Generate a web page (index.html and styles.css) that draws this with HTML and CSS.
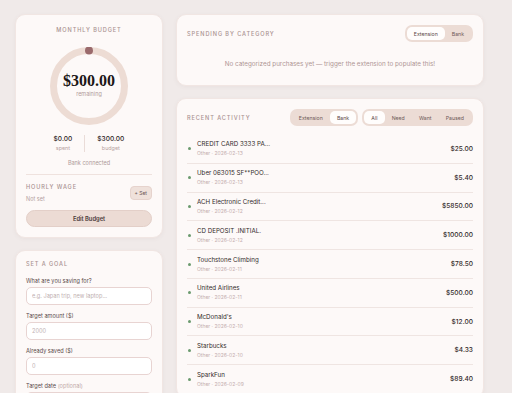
FILE: index.html
```html
<!DOCTYPE html>
<html lang="en">
<head>
  <meta charset="UTF-8" />
  <meta name="viewport" content="width=device-width, initial-scale=1.0"/>
  <title>Budget Dashboard</title>
  <link rel="stylesheet" href="styles.css">
</head>
<body>
  <div class="layout">
    <!-- Left column -->
    <div class="side">
      <div class="card budget">
        <div class="label center">Monthly Budget</div>

        <div class="ring">
          <svg width="78" height="78" viewBox="0 0 78 78">
            <circle cx="39" cy="39" r="35.5" fill="none" stroke="#eddcd4" stroke-width="7"/>
            <circle cx="39" cy="3.5" r="4" fill="#9a6a6c"/>
          </svg>
          <div class="ring-text">
            <div class="big">$300.00</div>
            <div class="small">remaining</div>
          </div>
        </div>

        <div class="stats">
          <div class="stat">
            <div class="stat-val">$0.00</div>
            <div class="stat-lbl">spent</div>
          </div>
          <div class="stat-div"></div>
          <div class="stat">
            <div class="stat-val">$300.00</div>
            <div class="stat-lbl">budget</div>
          </div>
        </div>

        <div class="bank-note">Bank connected</div>

        <div class="wage">
          <div>
            <div class="label">Hourly Wage</div>
            <div class="muted">Not set</div>
          </div>
          <button class="mini-btn">+ Set</button>
        </div>

        <button class="wide-btn">Edit Budget</button>
      </div>

      <div class="card goal">
        <div class="label">Set a Goal</div>
        <label class="field-lbl">What are you saving for?</label>
        <input type="text" placeholder="e.g. Japan trip, new laptop..." />
        <label class="field-lbl">Target amount ($)</label>
        <input type="text" placeholder="2000" />
        <label class="field-lbl">Already saved ($)</label>
        <input type="text" placeholder="0" />
        <label class="field-lbl">Target date <span class="opt">(optional)</span></label>
        <input type="text" />
      </div>
    </div>

    <!-- Right column -->
    <div class="main">
      <div class="card">
        <div class="card-head">
          <div class="label">Spending by Category</div>
          <div class="seg">
            <span class="on">Extension</span>
            <span>Bank</span>
          </div>
        </div>
        <p class="empty">No categorized purchases yet — trigger the extension to populate this!</p>
      </div>

      <div class="card activity">
        <div class="card-head">
          <div class="label">Recent Activity</div>
          <div class="segs">
            <div class="seg">
              <span>Extension</span>
              <span class="on">Bank</span>
            </div>
            <div class="seg">
              <span class="on">All</span>
              <span>Need</span>
              <span>Want</span>
              <span>Paused</span>
            </div>
          </div>
        </div>

        <ul class="txns">
          <li><i class="dot"></i><div class="info"><div class="name">CREDIT CARD 3333 PA...</div><div class="sub">Other · 2026-02-13</div></div><div class="amt">$25.00</div></li>
          <li><i class="dot"></i><div class="info"><div class="name">Uber 063015 SF**POO...</div><div class="sub">Other · 2026-02-13</div></div><div class="amt">$5.40</div></li>
          <li><i class="dot"></i><div class="info"><div class="name">ACH Electronic Credit...</div><div class="sub">Other · 2026-02-12</div></div><div class="amt">$5850.00</div></li>
          <li><i class="dot"></i><div class="info"><div class="name">CD DEPOSIT .INITIAL.</div><div class="sub">Other · 2026-02-12</div></div><div class="amt">$1000.00</div></li>
          <li><i class="dot"></i><div class="info"><div class="name">Touchstone Climbing</div><div class="sub">Other · 2026-02-11</div></div><div class="amt">$78.50</div></li>
          <li><i class="dot"></i><div class="info"><div class="name">United Airlines</div><div class="sub">Other · 2026-02-11</div></div><div class="amt">$500.00</div></li>
          <li><i class="dot"></i><div class="info"><div class="name">McDonald's</div><div class="sub">Other · 2026-02-10</div></div><div class="amt">$12.00</div></li>
          <li><i class="dot"></i><div class="info"><div class="name">Starbucks</div><div class="sub">Other · 2026-02-10</div></div><div class="amt">$4.33</div></li>
          <li><i class="dot"></i><div class="info"><div class="name">SparkFun</div><div class="sub">Other · 2026-02-09</div></div><div class="amt">$89.40</div></li>
        </ul>
      </div>
    </div>
  </div>
</body>
</html>
```

FILE: styles.css
```css
* {
  box-sizing: border-box;
  margin: 0;
  padding: 0;
  font-family: 'Inter', 'Roboto', sans-serif;
}

body {
  background: #f0eae9;
  color: #2e2626;
  height: 393px;
  overflow: hidden;
}

.layout {
  display: grid;
  grid-template-columns: 148px 308px;
  gap: 13px;
  padding: 14px 0 0 15px;
  align-items: start;
}

.side, .main {
  display: flex;
  flex-direction: column;
}

.side { gap: 12px; }
.main { gap: 12px; }

.card {
  background: #fdf9f8;
  border: 1px solid #f1e6e3;
  border-radius: 10px;
  box-shadow: 0 1px 4px rgba(120, 90, 90, 0.06);
}

.label {
  font-size: 5.6px;
  font-weight: 500;
  letter-spacing: 0.9px;
  text-transform: uppercase;
  color: #a99190;
}

.center { text-align: center; }

/* budget card */
.budget {
  padding: 12px 10px 10px;
  height: 224px;
}

.ring {
  position: relative;
  width: 78px;
  height: 78px;
  margin: 14px auto 0;
}

.ring svg { display: block; }

.ring-text {
  position: absolute;
  inset: 0;
  display: flex;
  flex-direction: column;
  align-items: center;
  justify-content: center;
  padding-bottom: 4px;
}

.big {
  font-family: 'Liberation Serif', serif;
  font-weight: 700;
  font-size: 16px;
  color: #1c1616;
  line-height: 18px;
}

.small {
  font-size: 5.5px;
  color: #b09a99;
  margin-top: 1px;
}

.stats {
  display: flex;
  justify-content: center;
  align-items: center;
  margin-top: 10px;
  gap: 12px;
}

.stat { text-align: center; }

.stat-val {
  font-size: 6.6px;
  font-weight: 500;
  color: #2e2626;
  line-height: 9px;
}

.stat-lbl {
  font-size: 5.4px;
  color: #b7a3a2;
  line-height: 8px;
}

.stat-div {
  width: 1px;
  height: 17px;
  background: #eadcd8;
}

.bank-note {
  text-align: center;
  font-size: 5.5px;
  color: #ae9a99;
  margin-top: 8px;
  padding-bottom: 8px;
  border-bottom: 1px solid #efe2de;
}

.wage {
  display: flex;
  justify-content: space-between;
  align-items: center;
  margin-top: 9px;
}

.wage .label { margin-bottom: 6px; }

.muted {
  font-size: 5.5px;
  color: #b4a09f;
}

.mini-btn {
  font-size: 5px;
  color: #6b5554;
  background: #efe1db;
  border: 1px solid #e6d3cd;
  border-radius: 4px;
  padding: 3px 4px;
  font-family: 'Inter', sans-serif;
}

.wide-btn {
  display: block;
  width: 100%;
  margin-top: 8px;
  height: 17px;
  border-radius: 9px;
  background: #ecdbd4;
  border: 1px solid #e3cfc8;
  font-size: 5.8px;
  font-weight: 600;
  color: #4a3a39;
}

/* goal card */
.goal {
  padding: 10px 10px 10px;
  height: 160px;
}

.field-lbl {
  display: block;
  font-size: 5.6px;
  color: #5b4a49;
  margin-top: 8px;
  margin-bottom: 3px;
}

.goal .label + .field-lbl { margin-top: 11px; }

.opt { color: #c2a9a8; }

.goal input {
  display: block;
  width: 100%;
  height: 18px;
  border: 1px solid #e8d4d2;
  border-radius: 5px;
  background: #fff;
  padding: 0 5px;
  font-size: 5.6px;
  color: #333;
}

.goal input::placeholder { color: #c0b0b0; }

/* right column */
.card-head {
  display: flex;
  justify-content: space-between;
  align-items: center;
}

.main > .card {
  padding: 10px 10px 0 10px;
}

.main > .card:first-child {
  height: 72px;
}

.seg {
  display: flex;
  align-items: center;
  background: #ecdcd5;
  border-radius: 7px;
  padding: 2px;
}

.seg span {
  font-size: 5.2px;
  color: #6e5958;
  padding: 3.5px 7px;
  border-radius: 5px;
  line-height: 6px;
}

.seg span.on {
  background: #fffdfc;
  color: #5a4746;
}

.segs {
  display: flex;
  gap: 4px;
}

.segs .seg span { padding: 3.5px 7.1px; }

.empty {
  text-align: center;
  font-size: 6.3px;
  color: #ae9594;
  margin-top: 18px;
}

.activity { height: 300px; }

.txns {
  list-style: none;
  margin-top: 9px;
}

.txns li {
  display: flex;
  align-items: center;
  padding: 4.4px 0 4.4px 1px;
  border-bottom: 1px solid #efe5e2;
}

.dot {
  width: 3px;
  height: 3px;
  border-radius: 50%;
  background: #6b9a6e;
  margin-right: 6px;
  flex: none;
}

.info { flex: 1; }

.name {
  font-size: 6.2px;
  font-weight: 400;
  color: #332a2a;
  line-height: 10px;
}

.sub {
  font-size: 5px;
  color: #c4aeae;
  line-height: 9px;
}

.amt {
  font-size: 6.6px;
  font-weight: 500;
  color: #332a2a;
}
```
